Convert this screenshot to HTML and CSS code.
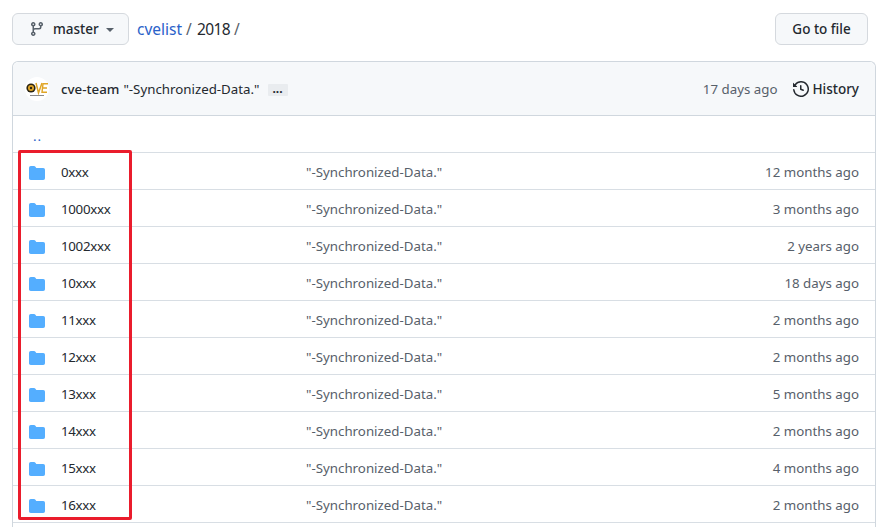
FILE: index.html
```html
<!DOCTYPE html>
<html>

<head>
    <meta charset="utf-8">
    <title>cvelist/2018</title>
    <link rel="stylesheet" href="styles.css">
</head>

<body>
    <div class="nav">
        <button class="btn btn-branch">
            <svg class="icon" width="16" height="16" viewBox="0 0 16 16">
                <path fill="#57606a" fill-rule="evenodd" d="M11.75 2.5a.75.75 0 100 1.5.75.75 0 000-1.5zm-2.25.75a2.25 2.25 0 113 2.122V6A2.5 2.5 0 0110 8.5H6a1 1 0 00-1 1v1.128a2.251 2.251 0 11-1.5 0V5.372a2.25 2.25 0 111.5 0v1.836A2.492 2.492 0 016 7h4a1 1 0 001-1v-.628A2.25 2.25 0 019.5 3.25zM4.25 12a.75.75 0 100 1.5.75.75 0 000-1.5zM3.5 3.25a.75.75 0 111.5 0 .75.75 0 01-1.5 0z"/>
            </svg>
            <span>master</span>
            <span class="caret"></span>
        </button>
        <div class="crumbs"><a href="#">cvelist</a> / <span>2018</span> /</div>
        <button class="btn btn-file">Go to file</button>
    </div>

    <div class="box">
        <div class="box-head">
            <svg class="avatar" width="24" height="24" viewBox="0 0 24 24">
                <circle cx="12" cy="12" r="12" fill="#fff"/>
                <circle cx="6" cy="11" r="4.6" fill="#2b2412"/>
                <circle cx="6" cy="11" r="3" fill="#e0a526"/>
                <circle cx="6" cy="11" r="1.2" fill="#2b2412"/>
                <path d="M11 6l2.5 10L17 6" fill="none" stroke="#e0a526" stroke-width="1.5"/>
                <path d="M23 6.7h-5l-1 8.6h5M17.6 11H22" fill="none" stroke="#e0a526" stroke-width="1.4"/>
                <path d="M5 18.5h14" stroke="#8a8a8a" stroke-width="1"/>
            </svg>
            <a class="author" href="#">cve-team</a>
            <a class="message" href="#">"-Synchronized-Data."</a>
            <span class="ellipsis">...</span>
            <span class="spacer"></span>
            <span class="age">17 days ago</span>
            <a class="history" href="#">
                <svg class="icon" width="16" height="16" viewBox="0 0 16 16">
                    <path fill="#24292f" fill-rule="evenodd" d="M1.643 3.143L.427 1.927A.25.25 0 000 2.104V5.75c0 .138.112.25.25.25h3.646a.25.25 0 00.177-.427L2.715 4.215a6.5 6.5 0 11-1.18 4.458.75.75 0 10-1.493.154 8.001 8.001 0 101.6-5.684zM7.75 4a.75.75 0 01.75.75v2.992l2.028.812a.75.75 0 01-.557 1.392l-2.5-1A.75.75 0 017 8.25v-3.5A.75.75 0 017.75 4z"/>
                </svg>
                History
            </a>
        </div>

        <div class="row row-up"><a href="#">..</a></div>

        <div class="row">
            <svg class="folder" viewBox="0 0 16 16"><path d="M1.75 1A1.75 1.75 0 000 2.75v10.5C0 14.216.784 15 1.75 15h12.5A1.75 1.75 0 0016 13.25v-8.5A1.75 1.75 0 0014.25 3H7.5a.25.25 0 01-.2-.1l-.9-1.2C6.07 1.26 5.55 1 5 1H1.75z"/></svg>
            <a class="name" href="#">0xxx</a>
            <a class="msg" href="#">"-Synchronized-Data."</a>
            <span class="time">12 months ago</span>
        </div>
        <div class="row">
            <svg class="folder" viewBox="0 0 16 16"><path d="M1.75 1A1.75 1.75 0 000 2.75v10.5C0 14.216.784 15 1.75 15h12.5A1.75 1.75 0 0016 13.25v-8.5A1.75 1.75 0 0014.25 3H7.5a.25.25 0 01-.2-.1l-.9-1.2C6.07 1.26 5.55 1 5 1H1.75z"/></svg>
            <a class="name" href="#">1000xxx</a>
            <a class="msg" href="#">"-Synchronized-Data."</a>
            <span class="time">3 months ago</span>
        </div>
        <div class="row">
            <svg class="folder" viewBox="0 0 16 16"><path d="M1.75 1A1.75 1.75 0 000 2.75v10.5C0 14.216.784 15 1.75 15h12.5A1.75 1.75 0 0016 13.25v-8.5A1.75 1.75 0 0014.25 3H7.5a.25.25 0 01-.2-.1l-.9-1.2C6.07 1.26 5.55 1 5 1H1.75z"/></svg>
            <a class="name" href="#">1002xxx</a>
            <a class="msg" href="#">"-Synchronized-Data."</a>
            <span class="time">2 years ago</span>
        </div>
        <div class="row">
            <svg class="folder" viewBox="0 0 16 16"><path d="M1.75 1A1.75 1.75 0 000 2.75v10.5C0 14.216.784 15 1.75 15h12.5A1.75 1.75 0 0016 13.25v-8.5A1.75 1.75 0 0014.25 3H7.5a.25.25 0 01-.2-.1l-.9-1.2C6.07 1.26 5.55 1 5 1H1.75z"/></svg>
            <a class="name" href="#">10xxx</a>
            <a class="msg" href="#">"-Synchronized-Data."</a>
            <span class="time">18 days ago</span>
        </div>
        <div class="row">
            <svg class="folder" viewBox="0 0 16 16"><path d="M1.75 1A1.75 1.75 0 000 2.75v10.5C0 14.216.784 15 1.75 15h12.5A1.75 1.75 0 0016 13.25v-8.5A1.75 1.75 0 0014.25 3H7.5a.25.25 0 01-.2-.1l-.9-1.2C6.07 1.26 5.55 1 5 1H1.75z"/></svg>
            <a class="name" href="#">11xxx</a>
            <a class="msg" href="#">"-Synchronized-Data."</a>
            <span class="time">2 months ago</span>
        </div>
        <div class="row">
            <svg class="folder" viewBox="0 0 16 16"><path d="M1.75 1A1.75 1.75 0 000 2.75v10.5C0 14.216.784 15 1.75 15h12.5A1.75 1.75 0 0016 13.25v-8.5A1.75 1.75 0 0014.25 3H7.5a.25.25 0 01-.2-.1l-.9-1.2C6.07 1.26 5.55 1 5 1H1.75z"/></svg>
            <a class="name" href="#">12xxx</a>
            <a class="msg" href="#">"-Synchronized-Data."</a>
            <span class="time">2 months ago</span>
        </div>
        <div class="row">
            <svg class="folder" viewBox="0 0 16 16"><path d="M1.75 1A1.75 1.75 0 000 2.75v10.5C0 14.216.784 15 1.75 15h12.5A1.75 1.75 0 0016 13.25v-8.5A1.75 1.75 0 0014.25 3H7.5a.25.25 0 01-.2-.1l-.9-1.2C6.07 1.26 5.55 1 5 1H1.75z"/></svg>
            <a class="name" href="#">13xxx</a>
            <a class="msg" href="#">"-Synchronized-Data."</a>
            <span class="time">5 months ago</span>
        </div>
        <div class="row">
            <svg class="folder" viewBox="0 0 16 16"><path d="M1.75 1A1.75 1.75 0 000 2.75v10.5C0 14.216.784 15 1.75 15h12.5A1.75 1.75 0 0016 13.25v-8.5A1.75 1.75 0 0014.25 3H7.5a.25.25 0 01-.2-.1l-.9-1.2C6.07 1.26 5.55 1 5 1H1.75z"/></svg>
            <a class="name" href="#">14xxx</a>
            <a class="msg" href="#">"-Synchronized-Data."</a>
            <span class="time">2 months ago</span>
        </div>
        <div class="row">
            <svg class="folder" viewBox="0 0 16 16"><path d="M1.75 1A1.75 1.75 0 000 2.75v10.5C0 14.216.784 15 1.75 15h12.5A1.75 1.75 0 0016 13.25v-8.5A1.75 1.75 0 0014.25 3H7.5a.25.25 0 01-.2-.1l-.9-1.2C6.07 1.26 5.55 1 5 1H1.75z"/></svg>
            <a class="name" href="#">15xxx</a>
            <a class="msg" href="#">"-Synchronized-Data."</a>
            <span class="time">4 months ago</span>
        </div>
        <div class="row">
            <svg class="folder" viewBox="0 0 16 16"><path d="M1.75 1A1.75 1.75 0 000 2.75v10.5C0 14.216.784 15 1.75 15h12.5A1.75 1.75 0 0016 13.25v-8.5A1.75 1.75 0 0014.25 3H7.5a.25.25 0 01-.2-.1l-.9-1.2C6.07 1.26 5.55 1 5 1H1.75z"/></svg>
            <a class="name" href="#">16xxx</a>
            <a class="msg" href="#">"-Synchronized-Data."</a>
            <span class="time">2 months ago</span>
        </div>
    </div>

    <div class="mark"></div>
</body>

</html>
```

FILE: styles.css
```css
html,
body {
    height: 527px;
    overflow: hidden;
}

body {
    position: relative;
    display: flex;
    flex-direction: column;
    margin: 0;
    padding: 13px 4px 0 12px;
    box-sizing: border-box;
    font-family: "Noto Sans", "Open Sans", sans-serif;
    font-size: 13.3px;
    color: #24292f;
    background-color: #fff;
}

a {
    color: inherit;
    text-decoration: none;
}

.nav {
    display: flex;
    flex: none;
    align-items: center;
    height: 32px;
    margin-right: 8px;
    margin-bottom: 16px;
}

.btn {
    display: flex;
    align-items: center;
    height: 32px;
    box-sizing: border-box;
    font: inherit;
    font-size: 13.5px;
    font-weight: 500;
    color: #24292f;
    background-color: #f6f8fa;
    border: 1px solid #d5d9de;
    border-radius: 6px;
}

.btn-branch {
    width: 117px;
    padding: 0 0 0 16px;
}

.btn-branch span:first-of-type {
    margin-left: 8px;
}

.caret {
    margin-left: 7px;
    margin-top: 2px;
    border-top: 4px solid #57606a;
    border-left: 4px solid transparent;
    border-right: 4px solid transparent;
}

.crumbs {
    margin-left: 8px;
    font-size: 15.5px;
    color: #57606a;
}

.crumbs a {
    color: #2a62c9;
}

.crumbs span {
    margin-left: 1px;
    letter-spacing: -0.6px;
    color: #24292f;
}

.btn-file {
    width: 93px;
    justify-content: center;
    margin-left: auto;
    padding: 0;
}

/* the list runs on below the window, so the box has no bottom edge */
.box {
    flex: 1;
    min-height: 0;
    border: 1px solid #d0d7de;
    border-bottom: none;
    border-radius: 6px 6px 0 0;
}

.box-head {
    display: flex;
    align-items: center;
    height: 53px;
    padding: 0 16px 0 12px;
    background-color: #f6f8fa;
    border-radius: 6px 6px 0 0;
    border-bottom: 1px solid #d0d7de;
}

.avatar {
    flex: none;
    margin-right: 12px;
}

.author {
    font-weight: 500;
}

.message {
    margin-left: 4px;
}

.ellipsis {
    width: 20px;
    height: 12px;
    margin-left: 8px;
    margin-top: 3px;
    font-size: 12px;
    font-weight: 700;
    line-height: 9px;
    text-align: center;
    background-color: #e9ecef;
    border-radius: 1px;
}

.spacer {
    flex: 1;
}

.age {
    color: #57606a;
}

.history {
    display: flex;
    align-items: center;
    gap: 3px;
    margin-left: 16px;
    font-size: 13.5px;
    font-weight: 500;
}

.row {
    display: flex;
    align-items: center;
    height: 34px;
    padding: 2px 16px 0;
    border-bottom: 1px solid #d8dee4;
}

.row-up a {
    margin-top: 2px;
    margin-left: 4px;
    letter-spacing: 1px;
    color: #2a62c9;
}

.folder {
    flex: none;
    width: 16px;
    height: 16px;
    margin-top: 2px;
    margin-right: 16px;
    fill: #54aeff;
}

.name {
    width: 245px;
    flex: none;
    letter-spacing: -0.3px;
}

.msg {
    color: #57606a;
}

.time {
    margin-left: auto;
    color: #57606a;
}

/* red annotation drawn over the folder names */
.mark {
    position: absolute;
    left: 18px;
    top: 150px;
    width: 108px;
    height: 364px;
    border: 3px solid #ea1c2c;
    border-radius: 2px;
}
```
